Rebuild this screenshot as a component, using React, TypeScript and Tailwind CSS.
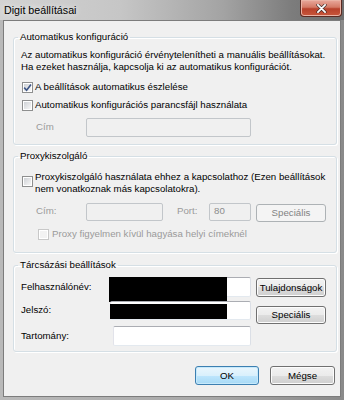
import type { ReactNode } from 'react';

function Check({ checked = false, disabled = false }: { checked?: boolean; disabled?: boolean }) {
  return (
    <span
      className={`flex h-[11px] w-[11px] shrink-0 items-center justify-center border ${
        disabled ? 'border-[#c8c8c8]' : 'border-[#8e8f8f]'
      } bg-white`}
    >
      <span
        className={`relative h-[7px] w-[7px] ${
          disabled
            ? 'bg-[#f2f2f2]'
            : 'bg-[linear-gradient(135deg,#cfd2d6,#f7f7f7)]'
        }`}
      >
        {checked && (
          <svg
            viewBox="0 0 9 9"
            className="absolute left-[-1px] top-[-1px] h-[9px] w-[9px]"
          >
            <polyline
              points="1.2,4.6 3.6,7.2 8,1.4"
              fill="none"
              stroke="#3d5585"
              strokeWidth="1.6"
            />
          </svg>
        )}
      </span>
    </span>
  );
}

function Btn({
  children,
  className = '',
  disabled = false,
  primary = false,
}: {
  children: ReactNode;
  className?: string;
  disabled?: boolean;
  primary?: boolean;
}) {
  const look = disabled
    ? 'border-[#adb2b5] bg-[#f4f4f4] text-[#838383]'
    : primary
    ? 'border-[#3c7fb1] bg-[linear-gradient(#eaf6fd,#d9f0fc_50%,#bee6fd_50%,#a7d9f5)] shadow-[inset_0_0_0_1px_#c6e9fb] text-black'
    : 'border-[#707070] bg-[linear-gradient(#f2f2f2,#ebebeb_50%,#dddddd_50%,#cfcfcf)] shadow-[inset_0_0_0_1px_#fcfcfc] text-black';
  return (
    <div
      className={`flex shrink-0 items-center justify-center rounded-[3px] border leading-[12px] ${look} ${className}`}
    >
      {children}
    </div>
  );
}

function Field({ className = '', disabled = false, children }: { className?: string; disabled?: boolean; children?: ReactNode }) {
  return (
    <div
      className={`relative flex shrink-0 items-center rounded-[2px] border pl-[4px] ${
        disabled
          ? 'border-[#c2c6ca] bg-[#f0f0f0] text-[#8d8d8d]'
          : 'border-[#abadb3] border-b-[#e3e9ef] border-l-[#e2e3ea] border-r-[#dbdfe6] bg-white'
      } ${className}`}
    >
      {children}
    </div>
  );
}

function Group({ title, className = '', children }: { title: string; className?: string; children: ReactNode }) {
  return (
    <fieldset
      className={`w-[324px] rounded-[3px] border border-[#d5dfe5] shadow-[inset_1px_1px_0_#ffffff,1px_1px_0_#ffffff] ${className}`}
    >
      <legend className="ml-[4px] px-[2px] leading-[12px]">{title}</legend>
      {children}
    </fieldset>
  );
}

export default function App() {
  return (
    <div className="flex h-[400px] w-[344px] flex-col overflow-hidden bg-[linear-gradient(90deg,#b9b9b9,#a9a9a9_60%,#8a8a8a)] font-['Liberation_Sans',Arial,sans-serif] text-[9.7px] text-black">
      {/* title bar */}
      <div className="flex h-[20px] shrink-0 items-start justify-between bg-[linear-gradient(90deg,#d3d3d3,#c6c6c6_35%,#a3a3a3_65%,#7c7c7c_85%,#6e6e6e)]">
        <span className="pl-[4px] pt-[4px] text-[10.7px] leading-[13px] text-black [text-shadow:0_0_6px_#ffffff]">
          Digit beállításai
        </span>
        <div className="mr-[2px] flex h-[17px] w-[42px] items-center justify-center rounded-b-[4px] border border-t-0 border-[#5b2a22] bg-[linear-gradient(#e9a99c,#d47a66_45%,#b8412b_55%,#c8573c)] shadow-[inset_0_0_0_1px_#eab3a5]">
          <svg viewBox="0 0 12 10" className="h-[9px] w-[11px]">
            <path
              d="M2 1 L10 9 M10 1 L2 9"
              stroke="#3a2a28"
              strokeWidth="3.4"
              strokeLinecap="round"
            />
            <path
              d="M2 1 L10 9 M10 1 L2 9"
              stroke="#ffffff"
              strokeWidth="2"
              strokeLinecap="round"
            />
          </svg>
        </div>
      </div>

      {/* client area */}
      <div className="mx-[3px] flex h-[377px] shrink-0 flex-col border border-[#7c7c7c] bg-[#f0f0f0] pl-[9px]">
        <Group title="Automatikus konfiguráció" className="mt-[10px] pb-[7px]">
          <p className="ml-[7px] mt-[6px] leading-[12px]">
            Az automatikus konfiguráció érvénytelenítheti a manuális beállításokat.
            <br />
            Ha ezeket használja, kapcsolja ki az automatikus konfigurációt.
          </p>
          <div className="ml-[8px] mt-[8px] flex h-[12px] items-center gap-[2px]">
            <Check checked />
            <span>A beállítások automatikus észlelése</span>
          </div>
          <div className="ml-[8px] mt-[6px] flex h-[12px] items-center gap-[2px]">
            <Check />
            <span>Automatikus konfigurációs parancsfájl használata</span>
          </div>
          <div className="mt-[7px] flex h-[19px] items-center">
            <span className="ml-[22px] w-[50px] text-[#9a9a9a]">Cím</span>
            <Field disabled className="h-[19px] w-[165px]" />
          </div>
        </Group>

        <Group title="Proxykiszolgáló" className="mt-[5px] pb-[12px]">
          <div className="ml-[8px] mt-[9px] flex items-start gap-[2px]">
            <div className="mt-[5px]">
              <Check />
            </div>
            <span className="leading-[12px]">
              Proxykiszolgáló használata ehhez a kapcsolathoz (Ezen beállítások
              <br />
              nem vonatkoznak más kapcsolatokra).
            </span>
          </div>
          <div className="mt-[7px] flex h-[19px] items-center text-[#9a9a9a]">
            <span className="ml-[22px] w-[50px]">Cím:</span>
            <Field disabled className="h-[18px] w-[77px]" />
            <span className="ml-[14px] w-[32px]">Port:</span>
            <Field disabled className="h-[18px] w-[42px]">
              80
            </Field>
            <Btn disabled className="ml-[5px] mt-[2px] h-[18px] w-[70px]">
              Speciális
            </Btn>
          </div>
          <div className="ml-[24px] mt-[7px] flex h-[12px] items-center gap-[3px] text-[#9a9a9a]">
            <Check disabled />
            <span>Proxy figyelmen kívül hagyása helyi címeknél</span>
          </div>
        </Group>

        <Group title="Tárcsázási beállítások" className="mt-[6px] pb-[5px]">
          <div className="flex">
            <div className="ml-[7px] flex w-[230px] flex-col">
              <div className="mt-[6px] flex h-[20px] items-center">
                <span className="w-[88px]">Felhasználónév:</span>
                <Field className="h-[20px] w-[142px]">
                  <div className="absolute left-[-1px] top-[-1px] h-[25px] w-[118px] bg-black" />
                </Field>
              </div>
              <div className="mt-[4px] flex h-[19px] items-center">
                <span className="w-[89px]">Jelszó:</span>
                <Field className="h-[19px] w-[141px]">
                  <div className="absolute left-[-1px] top-[2px] h-[15px] w-[117px] bg-black" />
                </Field>
              </div>
              <div className="mt-[6px] flex h-[20px] items-center">
                <span className="w-[92px]">Tartomány:</span>
                <Field className="h-[20px] w-[138px]" />
              </div>
            </div>
            <div className="ml-[5px] flex w-[70px] flex-col">
              <Btn className="mt-[7px] h-[19px] w-[70px]">Tulajdonságok</Btn>
              <Btn className="mt-[9px] h-[18px] w-[70px]">Speciális</Btn>
            </div>
          </div>
        </Group>

        <div className="mt-[14px] flex justify-end gap-[11px] pr-[5px]">
          <Btn primary className="h-[19px] w-[64px]">
            OK
          </Btn>
          <Btn className="h-[19px] w-[65px]">Mégse</Btn>
        </div>
      </div>
    </div>
  );
}
